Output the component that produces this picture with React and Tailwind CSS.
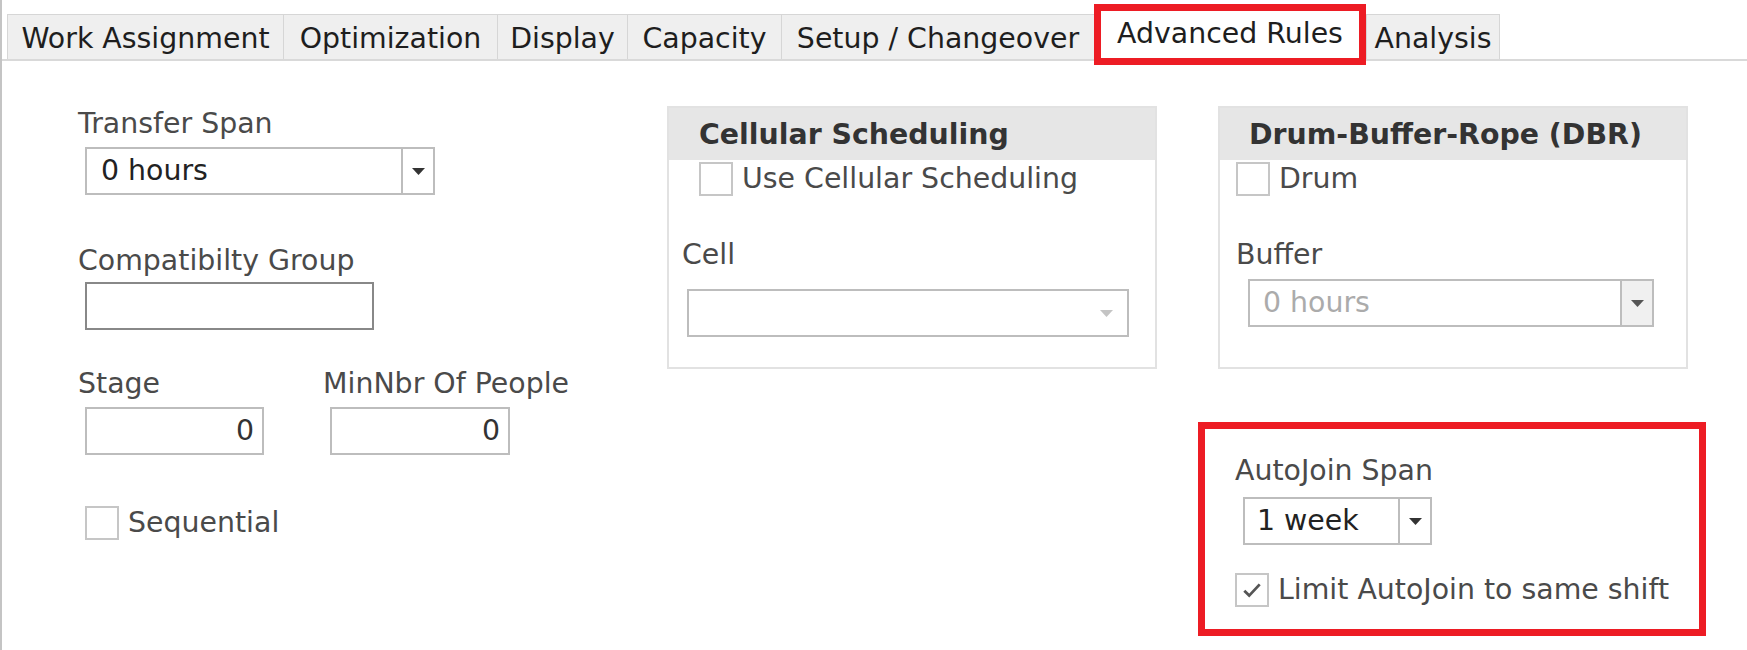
import React from 'react';

const tabs = [
  { label: 'Work Assignment', w: 'w-[276px]' },
  { label: 'Optimization', w: 'w-[214px]' },
  { label: 'Display', w: 'w-[130px]' },
  { label: 'Capacity', w: 'w-[154px]' },
  { label: 'Setup / Changeover', w: 'w-[313px]' },
  { label: 'Advanced Rules', w: 'w-[272px]', active: true },
  { label: 'Analysis', w: 'w-[134px]', last: true },
];

const Arrow = ({ color = '#333' }) => (
  <svg width="13" height="7" viewBox="0 0 13 7">
    <polygon points="0,0 13,0 6.5,7" fill={color} />
  </svg>
);

const Checkbox = ({ checked }) => (
  <span className="w-[34px] h-[34px] border-2 border-[#c6c6c6] bg-white flex items-center justify-center shrink-0">
    {checked && (
      <svg width="28" height="28" viewBox="0 0 20 20">
        <path d="M4.5 10.5 L8 14 L15.5 6" fill="none" stroke="#555" strokeWidth="2" />
      </svg>
    )}
  </span>
);

const CheckRow = ({ label, checked, className }) => (
  <div className={className}>
    <Checkbox checked={checked} />
    <span className="text-[#4a4a4a]">{label}</span>
  </div>
);

const Tab = ({ tab }) => {
  if (tab.active) {
    return (
      <div className={`relative ${tab.w} h-[45px] bg-white flex items-center justify-center pb-[5px] text-[#1e1e1e]`}>
        {tab.label}
        <div className="absolute left-0 right-0 top-[-10px] bottom-[-6px] border-[7px] border-[#ed1c24]" />
      </div>
    );
  }
  return (
    <div
      className={`${tab.w} h-[45px] bg-[#efefef] border-t border-l border-[#d6d6d6] flex items-center justify-center pt-[3px] text-[#1e1e1e] ${tab.last ? 'border-r' : ''}`}
    >
      {tab.label}
    </div>
  );
};

const Panel = ({ title, children }) => (
  <div className="h-[263px] border-2 border-[#e2e2e2] bg-white">
    <div className="h-[52px] bg-[#e6e6e6] pt-[10px] font-bold text-[#333]">{title}</div>
    {children}
  </div>
);

export default function App() {
  return (
    <div className="w-[1747px] h-[650px] bg-white overflow-hidden border-l-2 border-[#c4c4c4] font-['DejaVu_Sans','Verdana',sans-serif] text-[28.4px] leading-[34px] text-[#4a4a4a]">
      <div className="flex pt-[14px] pl-[5px] border-b-2 border-[#d9d9d9]">
        {tabs.map((t) => (
          <Tab key={t.label} tab={t} />
        ))}
      </div>

      <div className="flex items-start">
        <div className="ml-[76px] w-[589px] shrink-0">
          <div className="mt-[46px]">Transfer Span</div>
          <div className="mt-[6px] ml-[7px] w-[350px] h-[48px] border-2 border-[#bdbdbd] flex">
            <div className="flex-1 flex items-center pl-[14px] text-[#222]">0 hours</div>
            <div className="w-[32px] border-l-2 border-[#bdbdbd] flex items-center justify-center">
              <Arrow />
            </div>
          </div>

          <div className="mt-[49px]">Compatibilty Group</div>
          <div className="mt-[4px] ml-[7px] w-[289px] h-[48px] border-2 border-[#888]" />

          <div className="flex mt-[37px]">
            <div className="w-[245px]">
              <div>Stage</div>
              <div className="mt-[6px] ml-[7px] w-[179px] h-[48px] border-2 border-[#bdbdbd] flex items-center justify-end pr-[8px] text-[#333]">0</div>
            </div>
            <div>
              <div>MinNbr Of People</div>
              <div className="mt-[6px] ml-[7px] w-[180px] h-[48px] border-2 border-[#bdbdbd] flex items-center justify-end pr-[8px] text-[#333]">0</div>
            </div>
          </div>

          <CheckRow label="Sequential" className="mt-[51px] ml-[7px] flex items-center gap-[9px]" />
        </div>

        <div className="mt-[45px] w-[490px] shrink-0">
          <Panel title={<span className="pl-[30px]">Cellular Scheduling</span>}>
            <CheckRow label="Use Cellular Scheduling" className="mt-[2px] ml-[30px] flex items-center gap-[9px]" />
            <div className="mt-[42px] ml-[13px]">Cell</div>
            <div className="mt-[17px] ml-[18px] w-[442px] h-[48px] border-2 border-[#bdbdbd] flex items-center justify-end pr-[14px]">
              <Arrow color="#c4c4c4" />
            </div>
          </Panel>
        </div>

        <div className="ml-[61px] w-[470px] shrink-0">
          <div className="mt-[45px]">
            <Panel title={<span className="pl-[29px]">Drum-Buffer-Rope (DBR)</span>}>
              <CheckRow label="Drum" className="mt-[2px] ml-[16px] flex items-center gap-[9px]" />
              <div className="mt-[42px] ml-[16px]">Buffer</div>
              <div className="mt-[7px] ml-[28px] w-[406px] h-[48px] border-2 border-[#bdbdbd] flex">
                <div className="flex-1 flex items-center pl-[13px] text-[#ababab]">0 hours</div>
                <div className="w-[32px] border-l-2 border-[#bdbdbd] bg-[#f0f0f0] flex items-center justify-center">
                  <Arrow color="#555" />
                </div>
              </div>
            </Panel>
          </div>

          <div className="mt-[53px] -ml-[20px] w-[508px] h-[214px] border-[7px] border-[#ed1c24] pt-[25px] pl-[30px]">
            <div>AutoJoin Span</div>
            <div className="mt-[9px] ml-[8px] w-[189px] h-[48px] border-2 border-[#bdbdbd] flex">
              <div className="flex-1 flex items-center pl-[12px] text-[#222]">1 week</div>
              <div className="w-[32px] border-l-2 border-[#bdbdbd] flex items-center justify-center">
                <Arrow />
              </div>
            </div>
            <CheckRow label="Limit AutoJoin to same shift" checked className="mt-[28px] flex items-center gap-[9px]" />
          </div>
        </div>
      </div>
    </div>
  );
}
